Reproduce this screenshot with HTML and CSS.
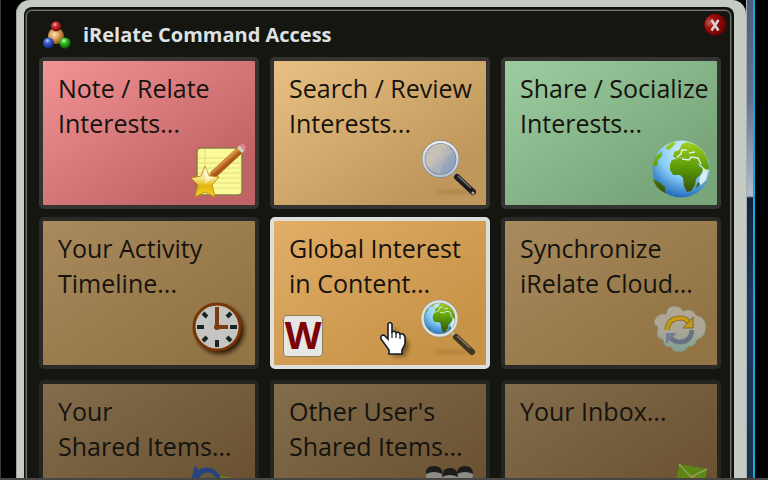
FILE: index.html
```html
<!DOCTYPE html>
<html lang="en">
<head>
<meta charset="utf-8">
<title>iRelate Command Access</title>
<link rel="stylesheet" href="styles.css">
</head>
<body>
<svg class="defs" aria-hidden="true">
  <defs>
    <radialGradient id="red" cx=".4" cy=".3" r=".7"><stop offset="0" stop-color="#ffb0a8"/><stop offset=".35" stop-color="#d03030"/><stop offset="1" stop-color="#6a0505"/></radialGradient>
    <radialGradient id="blue" cx=".4" cy=".3" r=".7"><stop offset="0" stop-color="#c0d0ff"/><stop offset=".35" stop-color="#3c60d0"/><stop offset="1" stop-color="#102470"/></radialGradient>
    <radialGradient id="green" cx=".4" cy=".3" r=".7"><stop offset="0" stop-color="#d0ffc0"/><stop offset=".35" stop-color="#34c028"/><stop offset="1" stop-color="#0c5a08"/></radialGradient>
    <radialGradient id="orange" cx=".4" cy=".4" r=".7"><stop offset="0" stop-color="#ffe6b8"/><stop offset=".5" stop-color="#cf934a"/><stop offset="1" stop-color="#6e4310"/></radialGradient>
    <radialGradient id="sea" cx=".6" cy=".2" r=".85"><stop offset="0" stop-color="#e6f8ff"/><stop offset=".55" stop-color="#86ccf6"/><stop offset="1" stop-color="#1460b4"/></radialGradient>
    <linearGradient id="land" x1="0" y1="0" x2="0" y2="1"><stop offset="0" stop-color="#a0d020"/><stop offset=".5" stop-color="#5c9a08"/><stop offset="1" stop-color="#35500a"/></linearGradient>
    <linearGradient id="glass" x1="0" y1="0" x2="1" y2="1"><stop offset="0" stop-color="#b9bcc4"/><stop offset=".35" stop-color="#c8c2b4"/><stop offset=".55" stop-color="#a3abb8"/><stop offset="1" stop-color="#7c98c8"/></linearGradient>
    <linearGradient id="ring" x1="0" y1="0" x2="0" y2="1"><stop offset="0" stop-color="#e8ecf0"/><stop offset="1" stop-color="#b8c4d2"/></linearGradient>
    <linearGradient id="gold" x1="0" y1="0" x2="0" y2="1"><stop offset="0" stop-color="#fff"/><stop offset=".4" stop-color="#f6e68a"/><stop offset=".65" stop-color="#e2b40c"/><stop offset="1" stop-color="#f8d830"/></linearGradient>
    <linearGradient id="cloud" x1="0" y1="0" x2="0" y2="1"><stop offset="0" stop-color="#b2a793"/><stop offset=".55" stop-color="#a9a695"/><stop offset="1" stop-color="#7da092"/></linearGradient>
    <linearGradient id="wood" gradientUnits="userSpaceOnUse" x1="30" y1="16" x2="36" y2="23"><stop offset="0" stop-color="#f6c888"/><stop offset=".5" stop-color="#e49848"/><stop offset="1" stop-color="#a85414"/></linearGradient>
    <filter id="soft" x="-30%" y="-30%" width="160%" height="160%"><feGaussianBlur stdDeviation="2"/></filter>
    <symbol id="earth" viewBox="0 0 58 58">
      <circle cx="29" cy="29" r="28.500" fill="url(#sea)"/>
      <path fill="url(#land)" d="M20 20l6-2 6-1 3 2 5 0 4 1 4 7 4 1-3 6-5 5-1 6-4 6-4 1-3-6-1-8-3-3-7 0-3-5 0-6zM21 17l1-5 5-2 3-6 5-2 9 3 7 6 4 7 2 8-1 9-4-4-2-5-4-3-3 1-4-2-5-1 0-3-5-1-5 1zM13 8l7-6 4 1-7 7zM1 26l2-9 7-6 0 5-4 4-1 6zM1 39l6 3 6 5 0 6C7 50 3 46 1 39zM45 44l3-3-1 5-3 2z"/>
      <path fill="none" stroke="#d8f2e0" stroke-width="1.500" d="M25 17l4-3 1-4 5 0M30 19l7 1 2-3 7 1 3 6M37 13l6-1"/>
      <path fill="#e4f8fa" opacity=".85" d="M50 26l3 3 4 1-3 10-5 5-2-3 1-5 3-5z"/>
    </symbol>
  </defs>
</svg>
<div class="desktop">
  <main class="frame">
    <div class="shell">
      <div class="panel">
        <header class="bar">
          <svg class="logo" viewBox="0 0 28 28" aria-hidden="true">
            <circle cx="13" cy="15" r="8" fill="url(#orange)"/>
            <circle cx="13" cy="5.500" r="5" fill="url(#red)"/>
            <circle cx="5.500" cy="22" r="5.500" fill="url(#blue)"/>
            <circle cx="22" cy="22" r="5.500" fill="url(#green)"/>
          </svg>
          <h1 class="title">iRelate Command Access</h1>
          <button class="close" aria-label="Close">
            <svg viewBox="0 0 24 24"><circle cx="12" cy="12" r="11.500" fill="#3a0c0a"/><circle cx="12" cy="11.500" r="10.500" fill="url(#closeRed)"/><path d="M8.500 7l7 10.500M15.500 7l-7 10.500" stroke="#d8d4d4" stroke-width="2.500"/>
            <defs><radialGradient id="closeRed" cx=".25" cy=".4" r=".8"><stop offset="0" stop-color="#c46058"/><stop offset=".35" stop-color="#a00c0c"/><stop offset="1" stop-color="#6c0000"/></radialGradient></defs></svg>
          </button>
        </header>
        <section class="grid">
          <button class="tile note"><span class="label">Note / Relate<br>Interests...</span>
            <span class="icons"><svg class="icon" viewBox="0 0 60 60">
              <rect x="6" y="7" width="45" height="47" rx="4" fill="#fafa98" stroke="#8d7a48" stroke-width="1.500"/>
              <path d="M7 17h43M7 22h43M7 27h43M7 32h43M7 37h43M7 42h43M7 47h43M14 8v45" stroke="#dede80"/>
              <path d="M18 38l2-7L46 7l5 5-26 24z" fill="url(#wood)" stroke="#b06c28" stroke-width=".8"/>
              <path d="M46 7l3-3 5 5-3 3z" fill="#d0d0c4"/><path d="M49 4l2-2q4 1 4 5l-2 2z" fill="#e88090" stroke="#b06870" stroke-width=".5"/>
              <path d="M14 25l4 10 10 1-7 8 3 12-10-5-10 5 3-12-7-7 10-2z" fill="url(#gold)" stroke="#c08c10" stroke-linejoin="round"/>
              <path d="M14 25l4 10 5 1-9 7z" fill="#fff" opacity=".5"/>
            </svg></span></button>
          <button class="tile search"><span class="label">Search / Review<br>Interests...</span>
            <span class="icons"><svg class="icon" viewBox="0 0 60 60">
              <ellipse cx="32" cy="51" rx="20" ry="2" fill="#7a5c30" opacity=".3" filter="url(#soft)"/>
              <path d="M31 32l4 4" stroke="#a8aaa8" stroke-width="3"/><path d="M35 36l16 15" stroke="#1d1d1d" stroke-width="6" stroke-linecap="round"/><path d="M36 35l13 12" stroke="#777" stroke-width="1.500"/><circle cx="51" cy="52" r="1.500" fill="#aaa"/>
              <circle cx="18.500" cy="18" r="17" fill="url(#glass)" stroke="#6b7480" stroke-width="3.500"/><circle cx="18.500" cy="18" r="17" fill="none" stroke="url(#ring)" stroke-width="2.500"/>
              <path d="M5 23Q12 8 32 10Q22 16 18 32Q8 31 5 23z" fill="#d8cfb8" opacity=".25"/>
            </svg></span></button>
          <button class="tile share"><span class="label">Share / Socialize<br>Interests...</span>
            <span class="icons"><svg class="icon" viewBox="0 0 60 60"><use href="#earth" x="-1" y="-1" width="58" height="58"/></svg></span></button>
          <button class="tile quiet"><span class="label">Your Activity<br>Timeline...</span>
            <span class="icons"><svg class="icon" viewBox="0 0 60 60">
              <circle cx="29" cy="29" r="24" fill="#1a1004" opacity=".9" filter="url(#soft)"/>
              <circle cx="26" cy="26" r="23" fill="#c4c5c3" stroke="#7a3505" stroke-width="3"/>
              <path d="M26 39v7M6 26h7M39 26h7M12 12l4 4M40 12l-4 4M12 40l4-4M40 40l-4-4" stroke="#182420" stroke-width="4"/>
              <path d="M26 6v20h11" fill="none" stroke="#7a3c10" stroke-width="4"/><circle cx="26" cy="26" r="3" fill="#7a3c10"/>
            </svg></span></button>
          <button class="tile current"><span class="label">Global Interest<br>in Content...</span>
            <span class="icons"><span class="word">W</span><svg class="icon" viewBox="0 0 60 60">
              <ellipse cx="30" cy="51" rx="20" ry="2" fill="#7a5420" opacity=".3" filter="url(#soft)"/>
              <path d="M30 32l4 4" stroke="#b8b8a8" stroke-width="3"/><path d="M34 36l16 15" stroke="#403522" stroke-width="6" stroke-linecap="round"/><path d="M35 35l13 12" stroke="#887c60" stroke-width="1.500"/>
              <use href="#earth" x="0" y="0" width="35" height="35"/>
              <circle cx="17.500" cy="17.500" r="17" fill="none" stroke="#8b8f84" stroke-width="3.500"/><circle cx="17.500" cy="17.500" r="17" fill="none" stroke="#dde2e0" stroke-width="2.500"/>
            </svg></span>
            <svg class="pointer" viewBox="0 0 28 36" aria-hidden="true">
              <path d="M13 8l4 1v6l10 3 2 8-4 9H13z" fill="#402c10" opacity=".6" filter="url(#soft)"/>
              <path d="M8 3q2-3 4 0v8q3-2 4 1 3-2 4 1 4-1 5 3v7l-3 6v4H9v-4L1 18q-1-4 3-4l4 4z" fill="#fff" stroke="#181c28" stroke-width="1.600"/>
              <path d="M12 11v6M16 12v5M20 13v5" stroke="#181c28" stroke-width="1.200"/>
            </svg></button>
          <button class="tile quiet"><span class="label">Synchronize<br>iRelate Cloud...</span>
            <span class="icons"><svg class="icon" viewBox="0 0 60 60">
              <path d="M13 13q1-8 8-8 7 0 9 5 9-4 13 4 10 2 10 12 0 10-9 13-2 7-9 7-4 6-10 5-5 0-7-5-7 1-8-7-7-2-6-8 0-3 1-5-6-3-3-8 3-6 11-5z" fill="url(#cloud)" stroke="#8b8468"/>
              <path d="M14 29q1-12 14-12 5 0 8 5" fill="none" stroke="#7b652b" stroke-width="5"/><path d="M14 29q1-12 14-12 5 0 8 5" fill="none" stroke="#c69a17" stroke-width="3.500"/><path d="M40 16v11H30z" fill="#c69a17" stroke="#7b652b"/>
              <path d="M39 29q-1 13-14 12-5-1-7-4" fill="none" stroke="#677180" stroke-width="4.500"/><path d="M13 43V32h11z" fill="#737f90"/>
            </svg></span></button>
        </section>
        <section class="grid later">
          <button class="tile faint"><span class="label">Your<br>Shared Items...</span>
            <span class="icons"><svg class="icon" viewBox="0 0 60 60">
              <path d="M4 1l3 5q14-7 22 6v16L0 17z" fill="#24457f"/><path d="M10 15q7-8 13 0" stroke="#65573c" stroke-width="5" fill="none"/><path d="M29 12l14 2-4 16-10-2z" fill="#668025"/>
            </svg></span></button>
          <button class="tile faint"><span class="label">Other User's<br>Shared Items...</span>
            <span class="icons"><svg class="icon" viewBox="0 0 60 60">
              <g fill="#8d8b84"><circle cx="12" cy="11" r="8"/><circle cx="28" cy="13" r="8"/><circle cx="43" cy="11" r="8"/><path d="M2 40V20h50v20z"/></g>
              <path d="M4 10q-1-8 8-8t8 8q-8-4-16 0zM20 13q0-9 8-9t8 9q-8-4-16 0zM35 10q0-8 8-8t8 8q-8-4-16 0z" fill="#1c1c1a"/>
            </svg></span></button>
          <button class="tile faint"><span class="label">Your Inbox...</span>
            <span class="icons"><svg class="icon" viewBox="0 0 60 60">
              <path d="M26 0l28 5-4 26-28-5z" fill="#5d8514"/><path d="M26 0l12 13L54 5" fill="none" stroke="#87a35a" stroke-width="1.500"/><circle cx="40" cy="13" r="2" fill="#a98a3c"/>
            </svg></span></button>
        </section>
      </div>
    </div>
  </main>
  <div class="backdrop"></div>
</div>
</body>
</html>
```
FILE: styles.css
```css
* { box-sizing: border-box; }

body {
  margin: 0;
  background: #000;
  font-family: "Open Sans", "Noto Sans", sans-serif;
}

.defs { position: absolute; width: 0; height: 0; }

.desktop {
  display: flex;
  height: 100vh;
  padding-left: 15px;
  overflow: hidden;
  border-left: 1px solid #3c3c3c;
  border-bottom: 2px solid #474645;
}

.frame {
  flex: 1;
  height: max-content;
  padding: 7px 12px 12px 8px;
  background: #c5cbc3;
  border-radius: 14px 14px 0 0;
  box-shadow: inset 1px 0 #9da39c;
}

.shell {
  padding: 3px 3px 3px 2px;
  background: #10100d;
  border-radius: 8px 8px 0 0;
}

.panel {
  padding-bottom: 12px;
  background: #15160f;
  border: 1px solid #777772;
  border-radius: 6px 6px 0 0;
  box-shadow: 0 0 0 1px #363633;
}

.bar {
  display: flex;
  align-items: center;
  gap: 12px;
  height: 46px;
  padding: 2px 3px 0 16px;
}

.logo { width: 28px; height: 28px; }

.title {
  flex: 1;
  margin: 0;
  font-size: 20px;
  font-weight: 700;
  line-height: 28px;
  color: #dfe1e4;
}

.close {
  align-self: flex-start;
  width: 24px;
  height: 24px;
  padding: 0;
  background: none;
  border: 0;
}

.close svg { display: block; }

.grid {
  display: grid;
  grid-template-columns: repeat(3, 1fr);
  gap: 8px 11px;
  padding: 0 9px 0 12px;
}

.later { margin-top: 11px; }

.tile {
  position: relative;
  display: flex;
  flex-direction: column;
  justify-content: space-between;
  height: 152px;
  padding: 10px 4px 4px 15px;
  border: 4px solid #333332;
  border-radius: 5px;
  font: inherit;
  font-size: 25px;
  line-height: 35px;
  text-align: left;
  white-space: nowrap;
  color: #15130f;
}

.note { background: linear-gradient(145deg, #f29495, #c26465 80%); }
.search { background: linear-gradient(145deg, #e9c084, #c0975a 80%); }
.share { background: linear-gradient(145deg, #9ccda0, #78a57a 80%); }
.quiet { background: linear-gradient(145deg, #a98a5e, #937444 80%); border-color: #2a2a28; }
.current { background: linear-gradient(145deg, #e2ae68, #c69347 80%); border-color: #dedede; }
.faint { background: linear-gradient(145deg, #836d4b, #6a5232 80%); border-color: #242421; }

.icons {
  display: flex;
  align-items: center;
  height: 60px;
}

.icon {
  width: 60px;
  height: 60px;
  margin-left: auto;
  overflow: visible;
}

.word {
  display: flex;
  justify-content: center;
  width: 40px;
  height: 42px;
  margin: 10px 0 0 -6px;
  background: #e6e6e4;
  border: 1px solid #8f7d58;
  border-radius: 4px;
  font-size: 38px;
  font-weight: 700;
  line-height: 36px;
  color: #7c0405;
}

.pointer {
  position: absolute;
  left: 106px;
  bottom: 8px;
  width: 28px;
  height: 36px;
  overflow: visible;
}

.backdrop {
  width: 9px;
  margin-right: 13px;
  background: linear-gradient(#4d5c78, #65748e 100px, #b4bcca 196px, #11233a 198px, #1f3b5e 300px, #19324c);
  border-left: 1px solid #a4acb4;
  border-right: 2px solid #17a8d8;
}
```
